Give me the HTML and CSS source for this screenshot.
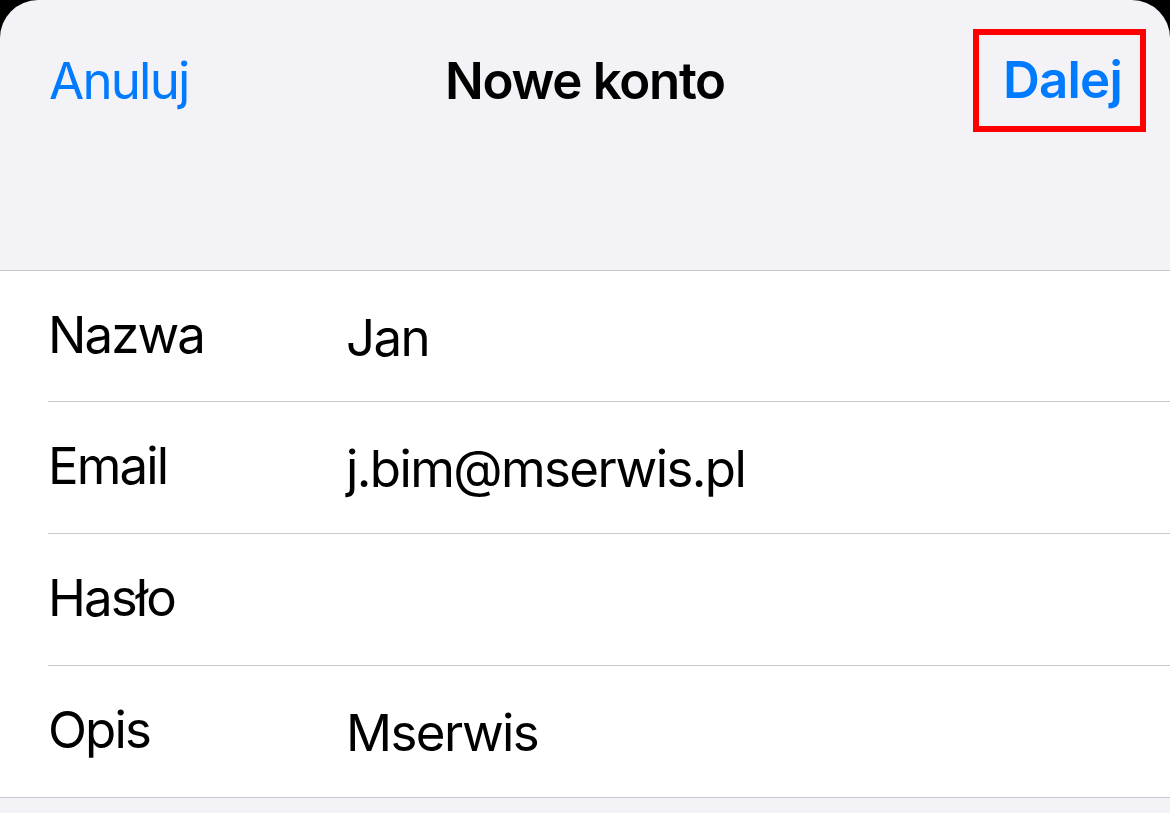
FILE: index.html
```html
<!DOCTYPE html>
<html lang="pl">
<head>
<meta charset="utf-8">
<title>Nowe konto</title>
<link rel="stylesheet" href="styles.css">
</head>
<body>
<div class="sheet">
  <header class="nav">
    <div class="nav-bar">
      <span class="nav-left">Anuluj</span>
      <span class="nav-title">Nowe konto</span>
      <div class="nav-right"><span class="next">Dalej</span></div>
    </div>
  </header>
  <section class="list">
    <div class="row"><div class="row-inner"><span class="label">Nazwa</span><span class="value">Jan</span></div></div>
    <div class="row"><div class="row-inner"><span class="label">Email</span><span class="value">j.bim@mserwis.pl</span></div></div>
    <div class="row"><div class="row-inner"><span class="label">Hasło</span><span class="value"></span></div></div>
    <div class="row"><div class="row-inner last"><span class="label">Opis</span><span class="value">Mserwis</span></div></div>
  </section>
</div>
</body>
</html>
```

FILE: styles.css
```css
html, body {
  margin: 0;
  padding: 0;
  background: #000;
}
body {
  font-family: Inter, "Noto Sans", "Liberation Sans", sans-serif;
  width: 1170px;
  height: 813px;
  overflow: hidden;
  letter-spacing: -1.4px;
}
.sheet {
  background: #f2f2f7;
  border-radius: 38px 38px 0 0;
  height: 813px;
  overflow: hidden;
}
.nav {
  height: 270px;
  border-bottom: 1px solid #c8c7cc;
}
.nav-bar {
  height: 161px;
  display: grid;
  grid-template-columns: 1fr auto 1fr;
  align-items: center;
  padding: 0 24px;
}
.nav-left {
  color: #007aff;
  font-size: 51px;
  font-weight: 400;
  justify-self: start;
  margin-left: 25px;
  letter-spacing: -1.8px;
}
.nav-title {
  color: #000;
  font-size: 51px;
  font-weight: 600;
  letter-spacing: -1.3px;
}
.nav-right {
  justify-self: end;
}
.next {
  display: block;
  color: #007aff;
  font-size: 51px;
  font-weight: 600;
  letter-spacing: -0.8px;
  border: 6px solid #ff0000;
  padding: 14px 18px 16px 24px;
  line-height: 61px;
}
.list {
  background: #fff;
  border-bottom: 1px solid #c8c7cc;
}
.row {
  padding-left: 48px;
}
.row-inner {
  height: 131px;
  display: flex;
  align-items: center;
  border-bottom: 1px solid #c8c7cc;
}
.row:first-child .row-inner {
  height: 130px;
}
.row-inner.last {
  border-bottom: none;
}
.label {
  width: 298px;
  box-sizing: border-box;
  font-size: 51px;
  letter-spacing: -1.9px;
  color: #000;
  position: relative;
  top: -2px;
}
.value {
  font-size: 51px;
  letter-spacing: -1.6px;
  color: #000;
  position: relative;
  top: 1px;
}
```
